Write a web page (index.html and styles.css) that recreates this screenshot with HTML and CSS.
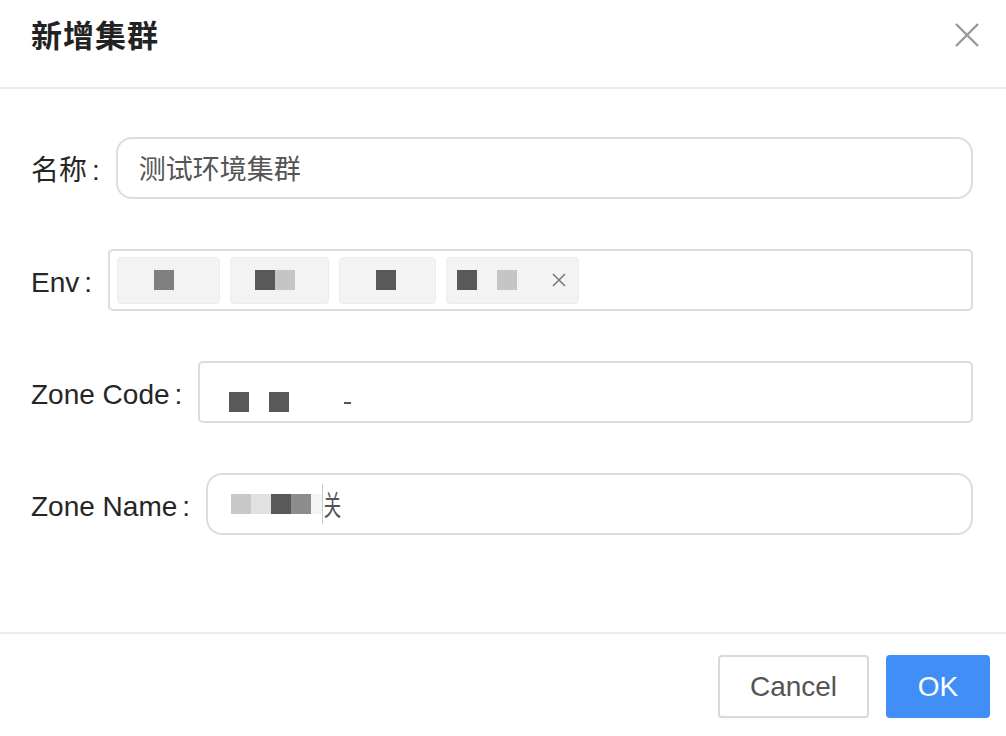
FILE: index.html
```html
<!DOCTYPE html>
<html lang="zh-CN">
<head>
<meta charset="utf-8">
<title>新增集群</title>
<link rel="stylesheet" href="styles.css">
</head>
<body>
<div class="modal">
  <div class="header">
    <div class="title">新增集群</div>
    <svg class="close" width="26" height="26" viewBox="0 0 26 26"><path d="M2 2 L24 24 M24 2 L2 24" stroke="#999" stroke-width="2.4" fill="none"/></svg>
  </div>
  <div class="body">
    <div class="row">
      <div class="label">名称</div>
      <div class="input round pad-name"><span class="val">测试环境集群</span></div>
    </div>
    <div class="row">
      <div class="label">Env</div>
      <div class="input select">
        <div class="tag w1"><span class="px mid"></span></div>
        <div class="tag w2"><span class="px dark"></span><span class="px light"></span></div>
        <div class="tag w3"><span class="px dark"></span></div>
        <div class="tag w4"><span class="px dark"></span><span class="px light gap"></span>
          <svg class="tag-x" width="14" height="14" viewBox="0 0 14 14"><path d="M1 1 L13 13 M13 1 L1 13" stroke="#777" stroke-width="1.5" fill="none"/></svg>
        </div>
      </div>
    </div>
    <div class="row">
      <div class="label">Zone Code</div>
      <div class="input pad-code">
        <span class="px dark low"></span><span class="px dark gap low"></span><span class="dash"></span>
      </div>
    </div>
    <div class="row">
      <div class="label">Zone Name</div>
      <div class="input round pad-zname">
        <span class="px c1"></span><span class="px c2"></span><span class="px dark"></span><span class="px c3"></span><span class="px c4"></span><span class="part">关</span>
      </div>
    </div>
  </div>
  <div class="footer">
    <button class="btn">Cancel</button>
    <button class="btn primary">OK</button>
  </div>
</div>
</body>
</html>
```

FILE: styles.css
```css
html, body {
  margin: 0;
  padding: 0;
  background: #fff;
  overflow: hidden;
}
body {
  width: 1006px;
  height: 736px;
  font-family: "Liberation Sans", "Noto Sans CJK SC", sans-serif;
  color: #262626;
}
.modal {
  display: flex;
  flex-direction: column;
  height: 736px;
}
.header {
  display: flex;
  justify-content: space-between;
  align-items: center;
  height: 44px;
  padding: 12px 26px 31px 31px;
  border-bottom: 2px solid #ececec;
}
.title {
  font-family: "Noto Sans CJK SC", sans-serif;
  font-weight: 700;
  font-size: 31px;
  line-height: 44px;
  color: #222;
  letter-spacing: 1px;
}
.close {
  display: block;
  margin-top: 2px;
}
.body {
  padding: 48px 33px 97px 31px;
  display: flex;
  flex-direction: column;
  gap: 50px;
}
.row {
  display: flex;
  align-items: center;
  height: 62px;
}
.label {
  font-size: 28px;
  line-height: 40px;
  padding-top: 6px;
  color: #262626;
  white-space: nowrap;
}
.label::after {
  content: ":";
  font-family: "Liberation Sans", sans-serif;
  margin: 0 16px 0 5px;
}
.input {
  flex: 1;
  box-sizing: border-box;
  height: 62px;
  border: 2px solid #dcdcdc;
  border-radius: 5px;
  display: flex;
  align-items: center;
  font-size: 28px;
  color: #595959;
}
.input.round {
  border-radius: 16px;
}
.pad-name { padding-left: 21px; }
.pad-code { padding-left: 29px; }
.pad-zname { padding-left: 23px; }
.val {
  font-family: "Noto Sans CJK SC", sans-serif;
  font-size: 27px;
  color: #555;
  line-height: 40px;
}
.select {
  padding-left: 7px;
  gap: 10px;
}
.tag {
  box-sizing: border-box;
  height: 47px;
  background: #f3f3f3;
  border: 1px solid #ededed;
  border-radius: 4px;
  display: flex;
  align-items: center;
  padding-left: 36px;
}
.w1 { width: 103px; }
.w2 { width: 99px; padding-left: 24px; }
.w3 { width: 97px; padding-left: 36px; }
.w4 { width: 133px; padding-left: 10px; }
.px {
  display: inline-block;
  width: 20px;
  height: 20px;
  flex: none;
}
.px.gap { margin-left: 20px; }
.px.low { margin-top: 20px; }
.mid { background: #808080; }
.dark { background: #595959; }
.light { background: #c5c5c5; }
.c1 { background: #c8c8c8; }
.c2 { background: #e1e1e1; }
.c3 { background: #8d8d8d; }
.c4 { background: #f5f5f5; width: 11px; }
.tag-x {
  margin-left: 35px;
  display: block;
}
.dash {
  display: inline-block;
  width: 7px;
  height: 2px;
  background: #555;
  margin-left: 55px;
  margin-top: 22px;
}
.part {
  display: inline-block;
  font-family: "Noto Sans CJK SC", sans-serif;
  font-size: 28px;
  line-height: 40px;
  color: #555;
  border-left: 1px solid #aaa;
  padding-left: 2px;
  transform: scaleX(0.62);
  transform-origin: left center;
}
.footer {
  border-top: 2px solid #ececec;
  padding: 21px 16px 18px;
  display: flex;
  justify-content: flex-end;
  gap: 17px;
}
.btn {
  box-sizing: border-box;
  height: 63px;
  font-family: "Liberation Sans", sans-serif;
  font-size: 28px;
  border-radius: 4px;
  border: 2px solid #d9d9d9;
  background: #fff;
  color: #555;
  width: 151px;
  box-shadow: 0 2px 0 rgba(0,0,0,0.02);
  padding: 0;
}
.btn.primary {
  width: 104px;
  background: #418ff6;
  border-color: #418ff6;
  color: #fff;
}
```
